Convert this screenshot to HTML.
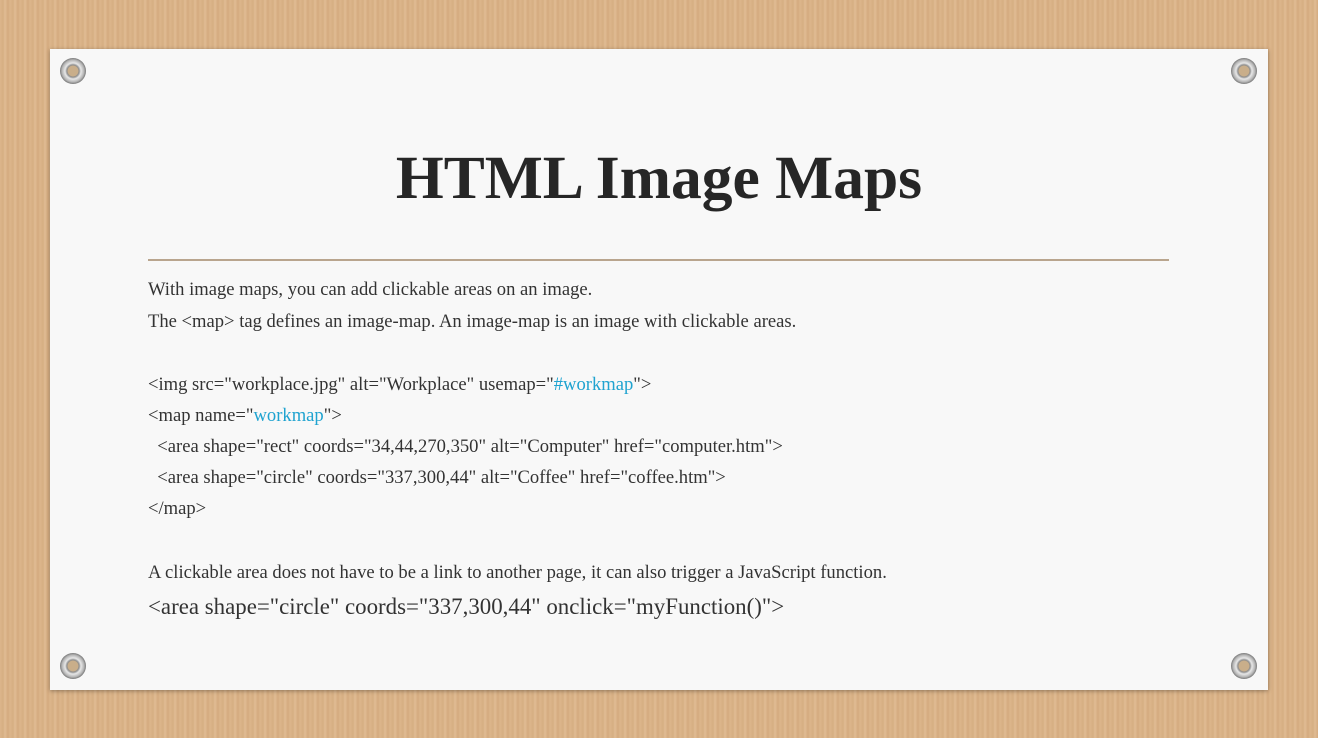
<!DOCTYPE html>
<html><head><style>
html,body{margin:0;padding:0}
body{width:1318px;height:738px;position:relative;overflow:hidden;
background:repeating-linear-gradient(90deg,#dcb68c 0px,#d6ae82 3px,#e0bc94 5px,#d4aa7e 8px,#dcb68c 10px);
font-family:"Liberation Serif",serif;color:#333}
.paper{position:absolute;left:50px;top:49px;width:1218px;height:641px;background:#f8f8f8;box-shadow:0 1px 4px rgba(0,0,0,.35)}
.screw{position:absolute;width:26px;height:26px;border-radius:50%;
background:radial-gradient(circle,#c9ae8a 0 5px,#8c8c8c 6px,#e8e8e8 8px,#b5b5b5 11px,#777 13px);}
h1{position:absolute;left:0;width:100%;top:94px;margin:0;text-align:center;font-size:61.5px;font-weight:bold;color:#262626;line-height:70px}
.rule{position:absolute;left:98px;width:1021px;top:210px;height:2px;background:#b9a58e}
.t{position:absolute;left:98px;font-size:18.6px;white-space:pre;color:#333;line-height:20px}
.b{color:#1fa3d0}
</style></head><body>
<div class="paper">
<div class="screw" style="left:10px;top:9px"></div>
<div class="screw" style="left:1181px;top:9px"></div>
<div class="screw" style="left:10px;top:604px"></div>
<div class="screw" style="left:1181px;top:604px"></div>
<h1>HTML Image Maps</h1>
<div class="rule"></div>
<div class="t" style="top:231px">With image maps, you can add clickable areas on an image.</div>
<div class="t" style="top:263px">The &lt;map&gt; tag defines an image-map. An image-map is an image with clickable areas.</div>
<div class="t" style="top:326px">&lt;img src="workplace.jpg" alt="Workplace" usemap="<span class="b">#workmap</span>"&gt;</div>
<div class="t" style="top:357px">&lt;map name="<span class="b">workmap</span>"&gt;</div>
<div class="t" style="top:388px">  &lt;area shape="rect" coords="34,44,270,350" alt="Computer" href="computer.htm"&gt;</div>
<div class="t" style="top:419px">  &lt;area shape="circle" coords="337,300,44" alt="Coffee" href="coffee.htm"&gt;</div>
<div class="t" style="top:450px">&lt;/map&gt;</div>
<div class="t" style="top:514px">A clickable area does not have to be a link to another page, it can also trigger a JavaScript function.</div>
<div class="t" style="top:546px;font-size:22.9px;line-height:24px">&lt;area shape="circle" coords="337,300,44" onclick="myFunction()"&gt;</div>
</div>
</body></html>
